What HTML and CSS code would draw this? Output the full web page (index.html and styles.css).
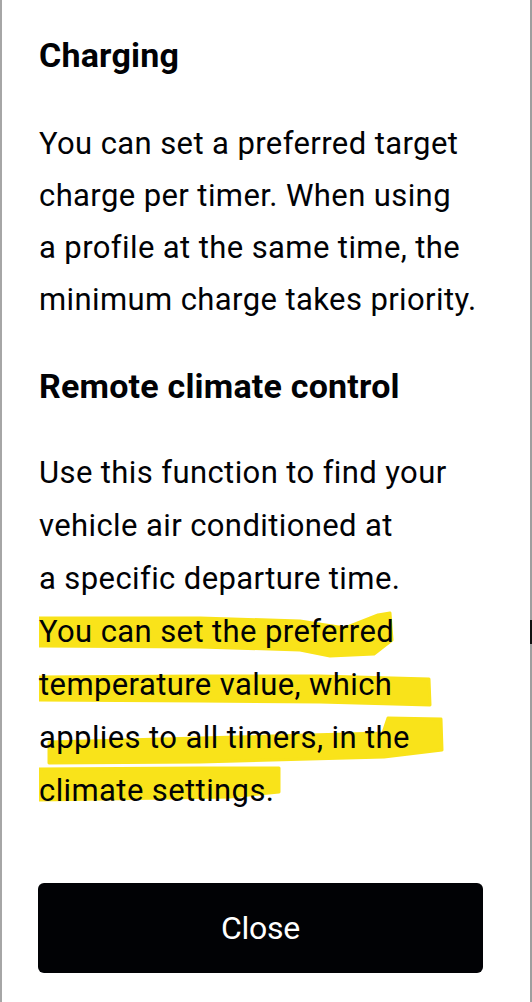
FILE: index.html
```html
<!DOCTYPE html>
<html lang="en">
<head>
<meta charset="utf-8">
<title>Timer info</title>
<link rel="stylesheet" href="styles.css">
</head>
<body>
<div class="sheet">
  <h2 class="title title-first">Charging</h2>
  <p class="text">You can set a preferred target<br>charge per timer. When using<br>a profile at the same time, the<br>minimum charge takes priority.</p>
  <h2 class="title title-second">Remote climate control</h2>
  <p class="text text-marked">
    <svg class="marker" width="444" height="380" viewBox="0 0 444 380" aria-hidden="true">
      <g transform="translate(-39 -446)" fill="#f9e31a" stroke="#f9e31a" stroke-width="3" stroke-linejoin="round">
        <path d="M34,618 L200,618 L300,621 L345,628 L378,615 L390,613 L392,640 L374,654 L330,656 L300,650 L200,647 L34,646 Z"/>
        <path d="M34,677 L200,676 L320,676 L429,679 L430,705 L320,702 L200,701 L34,700 Z"/>
        <path d="M49,742 L200,738 L383,733 L388,718 L441,719 L442,750 L384,757 L200,762 L49,763 Z"/>
        <path d="M36,769 L200,768 L279,768 L279,792 L230,797 L36,800 Z"/>
      </g>
    </svg>
    Use this function to find your<br>vehicle air conditioned at<br>a specific departure time.<br>You can set the preferred<br>temperature value, which<br>applies to all timers, in the<br>climate settings.
  </p>
  <button class="close" type="button">Close</button>
  <span class="scroll-mark"></span>
</div>
</body>
</html>
```
FILE: styles.css
```css
html {
  background: #ffffff;
}

body {
  margin: 0;
}

.sheet {
  position: relative;
  isolation: isolate;
  box-sizing: border-box;
  width: 532px;
  min-height: 1002px;
  border-left: 2px solid #a6a6a6;
  border-right: 2px solid #9e9e9e;
  padding: 35px 47px 0 37px;
  font-family: Roboto, "Liberation Sans", sans-serif;
  color: #010205;
}

.title {
  margin: 0;
  font-size: 34px;
  line-height: 40px;
  font-weight: 700;
  letter-spacing: 0.2px;
}

.title-second {
  margin-top: 40px;
}

.text {
  margin: 43px 0 0;
  font-size: 31px;
  line-height: 52px;
  font-weight: 400;
  letter-spacing: 0.4px;
}

.text-marked {
  position: relative;
  margin-top: 40px;
  line-height: 53px;
}

.marker {
  position: absolute;
  left: 0;
  top: 0;
  z-index: -1;
}

.close {
  display: block;
  width: 445px;
  height: 90px;
  margin: 66px 0 0 -1px;
  border: 0;
  border-radius: 6px;
  background: #010205;
  color: #ffffff;
  font-family: Roboto, "Liberation Sans", sans-serif;
  font-size: 32px;
  font-weight: 400;
  letter-spacing: -0.3px;
}

.scroll-mark {
  position: absolute;
  right: -2px;
  top: 620px;
  width: 2px;
  height: 24px;
  background: #111111;
}
```
